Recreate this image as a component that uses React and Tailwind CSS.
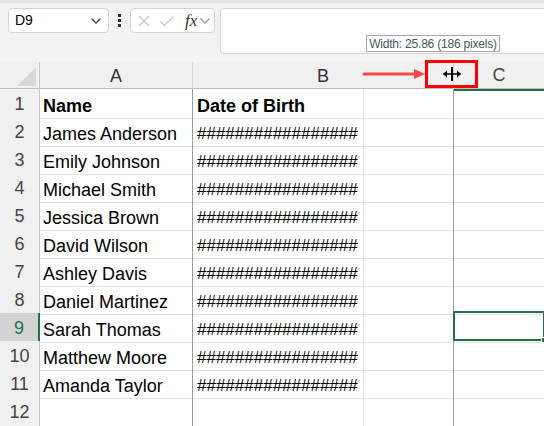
import React from "react";

const names = [
  "James Anderson",
  "Emily Johnson",
  "Michael Smith",
  "Jessica Brown",
  "David Wilson",
  "Ashley Davis",
  "Daniel Martinez",
  "Sarah Thomas",
  "Matthew Moore",
  "Amanda Taylor",
];

const font = { fontFamily: '"Liberation Sans", Arial, sans-serif' };

function Chevron({ className }) {
  return (
    <svg width="12" height="8" viewBox="0 0 12 8" className={className}>
      <path d="M1.5 1.5 L6 6 L10.5 1.5" fill="none" stroke="currentColor" strokeWidth="1.3" />
    </svg>
  );
}

function Row({ n, a, b, bold, selected }) {
  return (
    <div className="grid grid-cols-[40px_153px_171px_90px_90px] h-[28px]">
      <div
        className={`flex items-center justify-center pt-[2px] border-b border-[#e1e1e1] text-[18px] ${
          selected
            ? "bg-[#d3d3d3] text-[#217346] border-r-2 border-r-[#217346]"
            : "bg-[#f0f0f0] text-[#444] border-r border-r-[#c8c8c8]"
        }`}
      >
        {n}
      </div>
      <div
        className={`flex items-end pb-[1px] pl-[3px] leading-[22px] border-b border-[#e1e1e1] border-r border-r-[#9a9a9a] text-[18px] text-black whitespace-nowrap overflow-hidden ${
          bold ? "font-bold" : ""
        }`}
      >
        {a}
      </div>
      <div
        className={`flex items-end pb-[1px] pl-[4px] leading-[22px] border-b border-[#e1e1e1] border-r border-r-[#e1e1e1] text-black whitespace-nowrap overflow-hidden ${
          bold ? "font-bold text-[18px]" : "text-[17px]"
        }`}
      >
        {b}
      </div>
      <div className="border-b border-[#e1e1e1] border-r border-r-[#9a9a9a]" />
      <div className="relative border-b border-[#e1e1e1]">
        {selected && (
          <div className="absolute left-[-1px] top-[-2px] w-[92px] h-[30px] border-2 border-[#217346]">
            <div className="absolute right-[-4px] bottom-[-4px] w-[6px] h-[6px] bg-[#217346] border border-white" />
          </div>
        )}
      </div>
    </div>
  );
}

export default function App() {
  return (
    <div className="relative w-[544px] h-[426px] overflow-hidden bg-white" style={font}>
      {/* toolbar */}
      <div className="h-[62px] bg-[#f3f3f3] flex flex-col">
        <div className="h-[3px] bg-[#e2e2e2]" />
        <div className="flex items-start pt-[5px] pl-[8px]">
          <div className="w-[101px] h-[25px] bg-white border border-[#d4d4d4] rounded-[4px] flex items-center justify-between pl-[6px] pr-[6px]">
            <span className="text-[14px] text-black">D9</span>
            <Chevron className="text-[#444]" />
          </div>
          <div className="w-[21px] h-[25px] flex flex-col items-center justify-center gap-[2px]">
            <span className="w-[3px] h-[3px] bg-[#333]" />
            <span className="w-[3px] h-[3px] bg-[#333]" />
            <span className="w-[3px] h-[3px] bg-[#333]" />
          </div>
          <div className="w-[85px] h-[25px] bg-white border border-[#d4d4d4] rounded-[4px] flex items-center pl-[6px] gap-[8px]">
            <svg width="14" height="14" viewBox="0 0 14 14">
              <path d="M2 2 L12 12 M12 2 L2 12" stroke="#c4c4c4" strokeWidth="1.2" />
            </svg>
            <svg width="16" height="14" viewBox="0 0 16 14">
              <path d="M1.5 7.5 L5.5 11.5 L14.5 2.5" fill="none" stroke="#c4c4c4" strokeWidth="1.2" />
            </svg>
            <span
              className="italic text-[17px] leading-none text-[#333] ml-[2px]"
              style={{ fontFamily: '"Liberation Serif", "Times New Roman", serif' }}
            >
              fx
            </span>
            <Chevron className="text-[#999] -ml-[6px]" />
          </div>
          <div className="ml-[5px] flex-1 h-[46px] bg-white border border-[#d4d4d4] rounded-l-[4px] border-r-0" />
        </div>
      </div>

      {/* column header */}
      <div className="grid grid-cols-[40px_153px_261px_90px] h-[27px] bg-[#f0f0f0] border-b border-[#bdbdbd]">
        <div className="relative border-r border-[#c8c8c8]">
          <div
            className="absolute left-[17px] top-[5px] w-[19px] h-[19px] bg-[#d8d8d8]"
            style={{ clipPath: "polygon(100% 0, 100% 100%, 0 100%)" }}
          />
        </div>
        <div className="flex items-center justify-center text-[18px] text-[#333] border-r border-[#d6d6d6]">A</div>
        <div className="flex items-center justify-center text-[18px] text-[#333] border-r border-[#d6d6d6]">B</div>
        <div className="flex items-center justify-center text-[18px] text-[#444] border-b-2 border-[#217346] -mb-[1px]">C</div>
      </div>

      {/* rows */}
      <Row n={1} a="Name" b="Date of Birth" bold />
      {names.map((nm, i) => (
        <Row key={i} n={i + 2} a={nm} b="#################" selected={i + 2 === 9} />
      ))}
      <Row n={12} a="" b="" />

      {/* tooltip */}
      <div className="absolute left-[366px] top-[35px] w-[134px] h-[17px] bg-white border border-[#a8a8a8] flex items-center justify-center text-[12px] tracking-[-0.2px] text-[#3d5c5c] whitespace-nowrap">
        Width: 25.86 (186 pixels)
      </div>

      {/* red arrow */}
      <svg className="absolute left-[362px] top-[68px]" width="66" height="12" viewBox="0 0 66 12">
        <path d="M2 6 L54 6" stroke="#f4494b" strokeWidth="3" strokeLinecap="round" />
        <path d="M52 1 L63 6 L52 11 Z" fill="#f4494b" />
      </svg>

      {/* red highlight box */}
      <div className="absolute left-[425px] top-[60px] w-[53px] h-[28px] border-[3px] border-[#ff0000] flex items-center justify-center">
        <svg width="20" height="16" viewBox="0 0 20 16">
          <path d="M10 1 L10 15" stroke="#000" strokeWidth="2" />
          <path d="M1.5 8 L18.5 8" stroke="#000" strokeWidth="1.5" />
          <path d="M1 8 L5 4.5 L5 11.5 Z" fill="#000" />
          <path d="M19 8 L15 4.5 L15 11.5 Z" fill="#000" />
        </svg>
      </div>
    </div>
  );
}
